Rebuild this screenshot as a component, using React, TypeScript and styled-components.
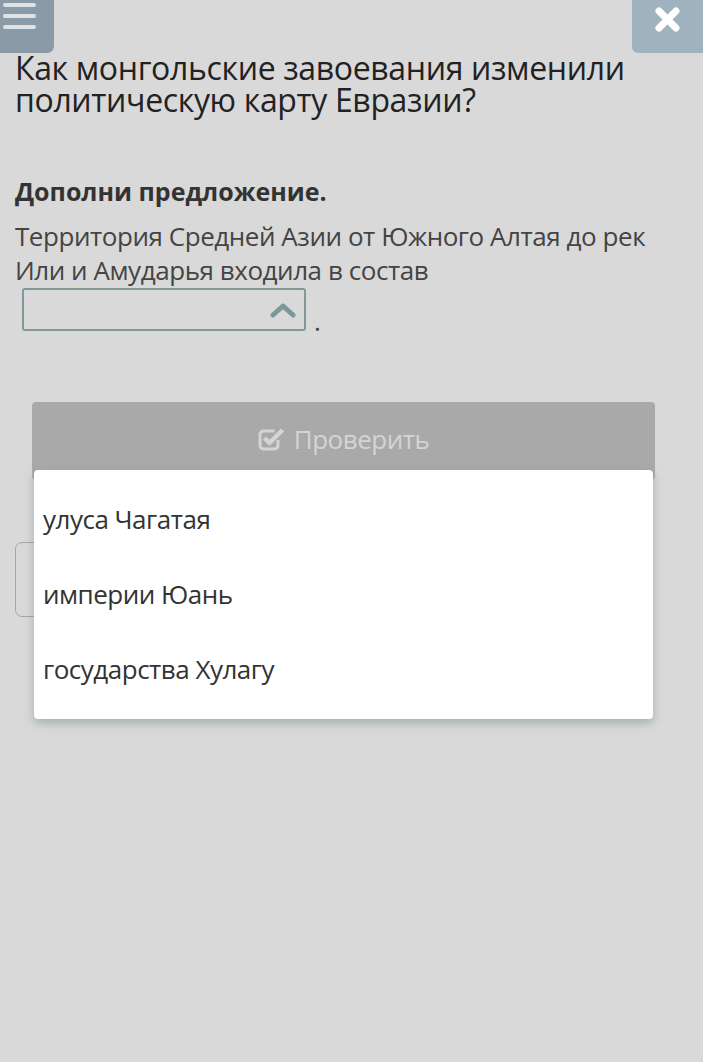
import React from 'react';
import styled, { createGlobalStyle } from 'styled-components';

const GlobalStyle = createGlobalStyle`
  body {
    margin: 0;
    background: #d9d9d9;
    font-family: 'Open Sans', 'Noto Sans', sans-serif;
  }
`;

const Page = styled.div`
  position: relative;
  min-height: 1062px;
  background: #d9d9d9;
  overflow: hidden;
`;

const TopBar = styled.div`
  display: flex;
  justify-content: space-between;
  height: 53px;
`;

const MenuButton = styled.div`
  width: 54px;
  height: 53px;
  background: #8a9ba7;
  border-bottom-right-radius: 7px;
  display: flex;
  flex-direction: column;
  gap: 7px;
  padding: 3px 0 0 3px;
  box-sizing: border-box;
`;

const MenuLine = styled.span`
  display: block;
  width: 33px;
  height: 4px;
  border-radius: 2px;
  background: #dfe3e6;
`;

const CloseButton = styled.div`
  width: 71px;
  height: 53px;
  background: #9fb3be;
  border-bottom-left-radius: 6px;
  display: flex;
  justify-content: center;
  padding-top: 6px;
  box-sizing: border-box;
`;

const Content = styled.div`
  padding: 0 15px;
`;

const Title = styled.h1`
  margin: -1px 0 0;
  font-size: 32px;
  line-height: 32px;
  font-weight: 400;
  color: #222;
  letter-spacing: -0.35px;
`;

const Task = styled.h2`
  margin: 60px 0 0;
  font-size: 25px;
  line-height: 30px;
  font-weight: 700;
  color: #333;
`;

const Body = styled.p`
  margin: 13px 0 0;
  font-size: 26px;
  line-height: 34px;
  color: #444;
  letter-spacing: -0.45px;
`;

const SelectRow = styled.div`
  display: flex;
  align-items: flex-end;
  gap: 8px;
  margin: 1px 0 0 7px;
`;

const SelectBox = styled.div`
  width: 284px;
  height: 43px;
  box-sizing: border-box;
  border: 2px solid #7f999b;
  border-radius: 3px;
  display: flex;
  justify-content: flex-end;
  align-items: center;
  padding-right: 8px;
`;

const Dot = styled.span`
  font-size: 26px;
  line-height: 20px;
  color: #444;
`;

const CheckButton = styled.div`
  margin: 71px 0 0 17px;
  width: 623px;
  height: 78px;
  background: #a9a9a9;
  border-radius: 4px;
  display: flex;
  justify-content: center;
  align-items: flex-start;
  padding-top: 20px;
  box-sizing: border-box;
  gap: 8px;
  color: #d4d4d4;
  font-size: 26px;
  line-height: 34px;
  letter-spacing: -0.5px;
`;

const NextBox = styled.div`
  margin: 62px 0 0 0;
  width: 620px;
  height: 75px;
  box-sizing: border-box;
  border: 1px solid #a6a6a6;
  border-radius: 7px;
`;

const Dropdown = styled.ul`
  position: absolute;
  top: 470px;
  left: 34px;
  width: 619px;
  height: 249px;
  margin: 0;
  padding: 30px 0 0;
  box-sizing: border-box;
  list-style: none;
  background: #fff;
  border-radius: 4px;
  box-shadow: 0 4px 10px rgba(120, 140, 135, 0.55);
`;

const Option = styled.li`
  padding-left: 9px;
  height: 75px;
  font-size: 26px;
  line-height: 38px;
  color: #333;
  letter-spacing: -0.5px;
`;

const CheckIcon = () => (
  <svg width="28" height="26" viewBox="0 0 28 26" style={{ marginTop: 4 }}>
    <path
      d="M20 14v5.5a3.5 3.5 0 0 1-3.5 3.5H5.5A3.5 3.5 0 0 1 2 19.5V8.5A3.5 3.5 0 0 1 5.5 5h11"
      fill="none"
      stroke="#d4d4d4"
      strokeWidth="3"
    />
    <path d="M6.5 12l5 5L24.5 4" fill="none" stroke="#d4d4d4" strokeWidth="4.5" strokeLinejoin="round" />
  </svg>
);

const App = () => (
  <Page>
    <GlobalStyle />
    <TopBar>
      <MenuButton>
        <MenuLine />
        <MenuLine />
        <MenuLine />
      </MenuButton>
      <CloseButton>
        <svg width="27" height="27" viewBox="0 0 27 27">
          <path d="M5 5L22 22M22 5L5 22" stroke="#fff" strokeWidth="7" strokeLinecap="round" />
        </svg>
      </CloseButton>
    </TopBar>
    <Content>
      <Title>
        Как монгольские завоевания изменили политическую карту Евразии?
      </Title>
      <Task>Дополни предложение.</Task>
      <Body>
        Территория Средней Азии от Южного Алтая до рек Или и Амударья входила в состав
      </Body>
      <SelectRow>
        <SelectBox>
          <svg width="26" height="16" viewBox="0 0 26 16">
            <path d="M3 13L13 4l10 9" fill="none" stroke="#7a9799" strokeWidth="5" strokeLinecap="round" strokeLinejoin="round" />
          </svg>
        </SelectBox>
        <Dot>.</Dot>
      </SelectRow>
      <CheckButton>
        <CheckIcon />
        Проверить
      </CheckButton>
      <NextBox />
    </Content>
    <Dropdown>
      <Option>улуса Чагатая</Option>
      <Option>империи Юань</Option>
      <Option>государства Хулагу</Option>
    </Dropdown>
  </Page>
);

export default App;
